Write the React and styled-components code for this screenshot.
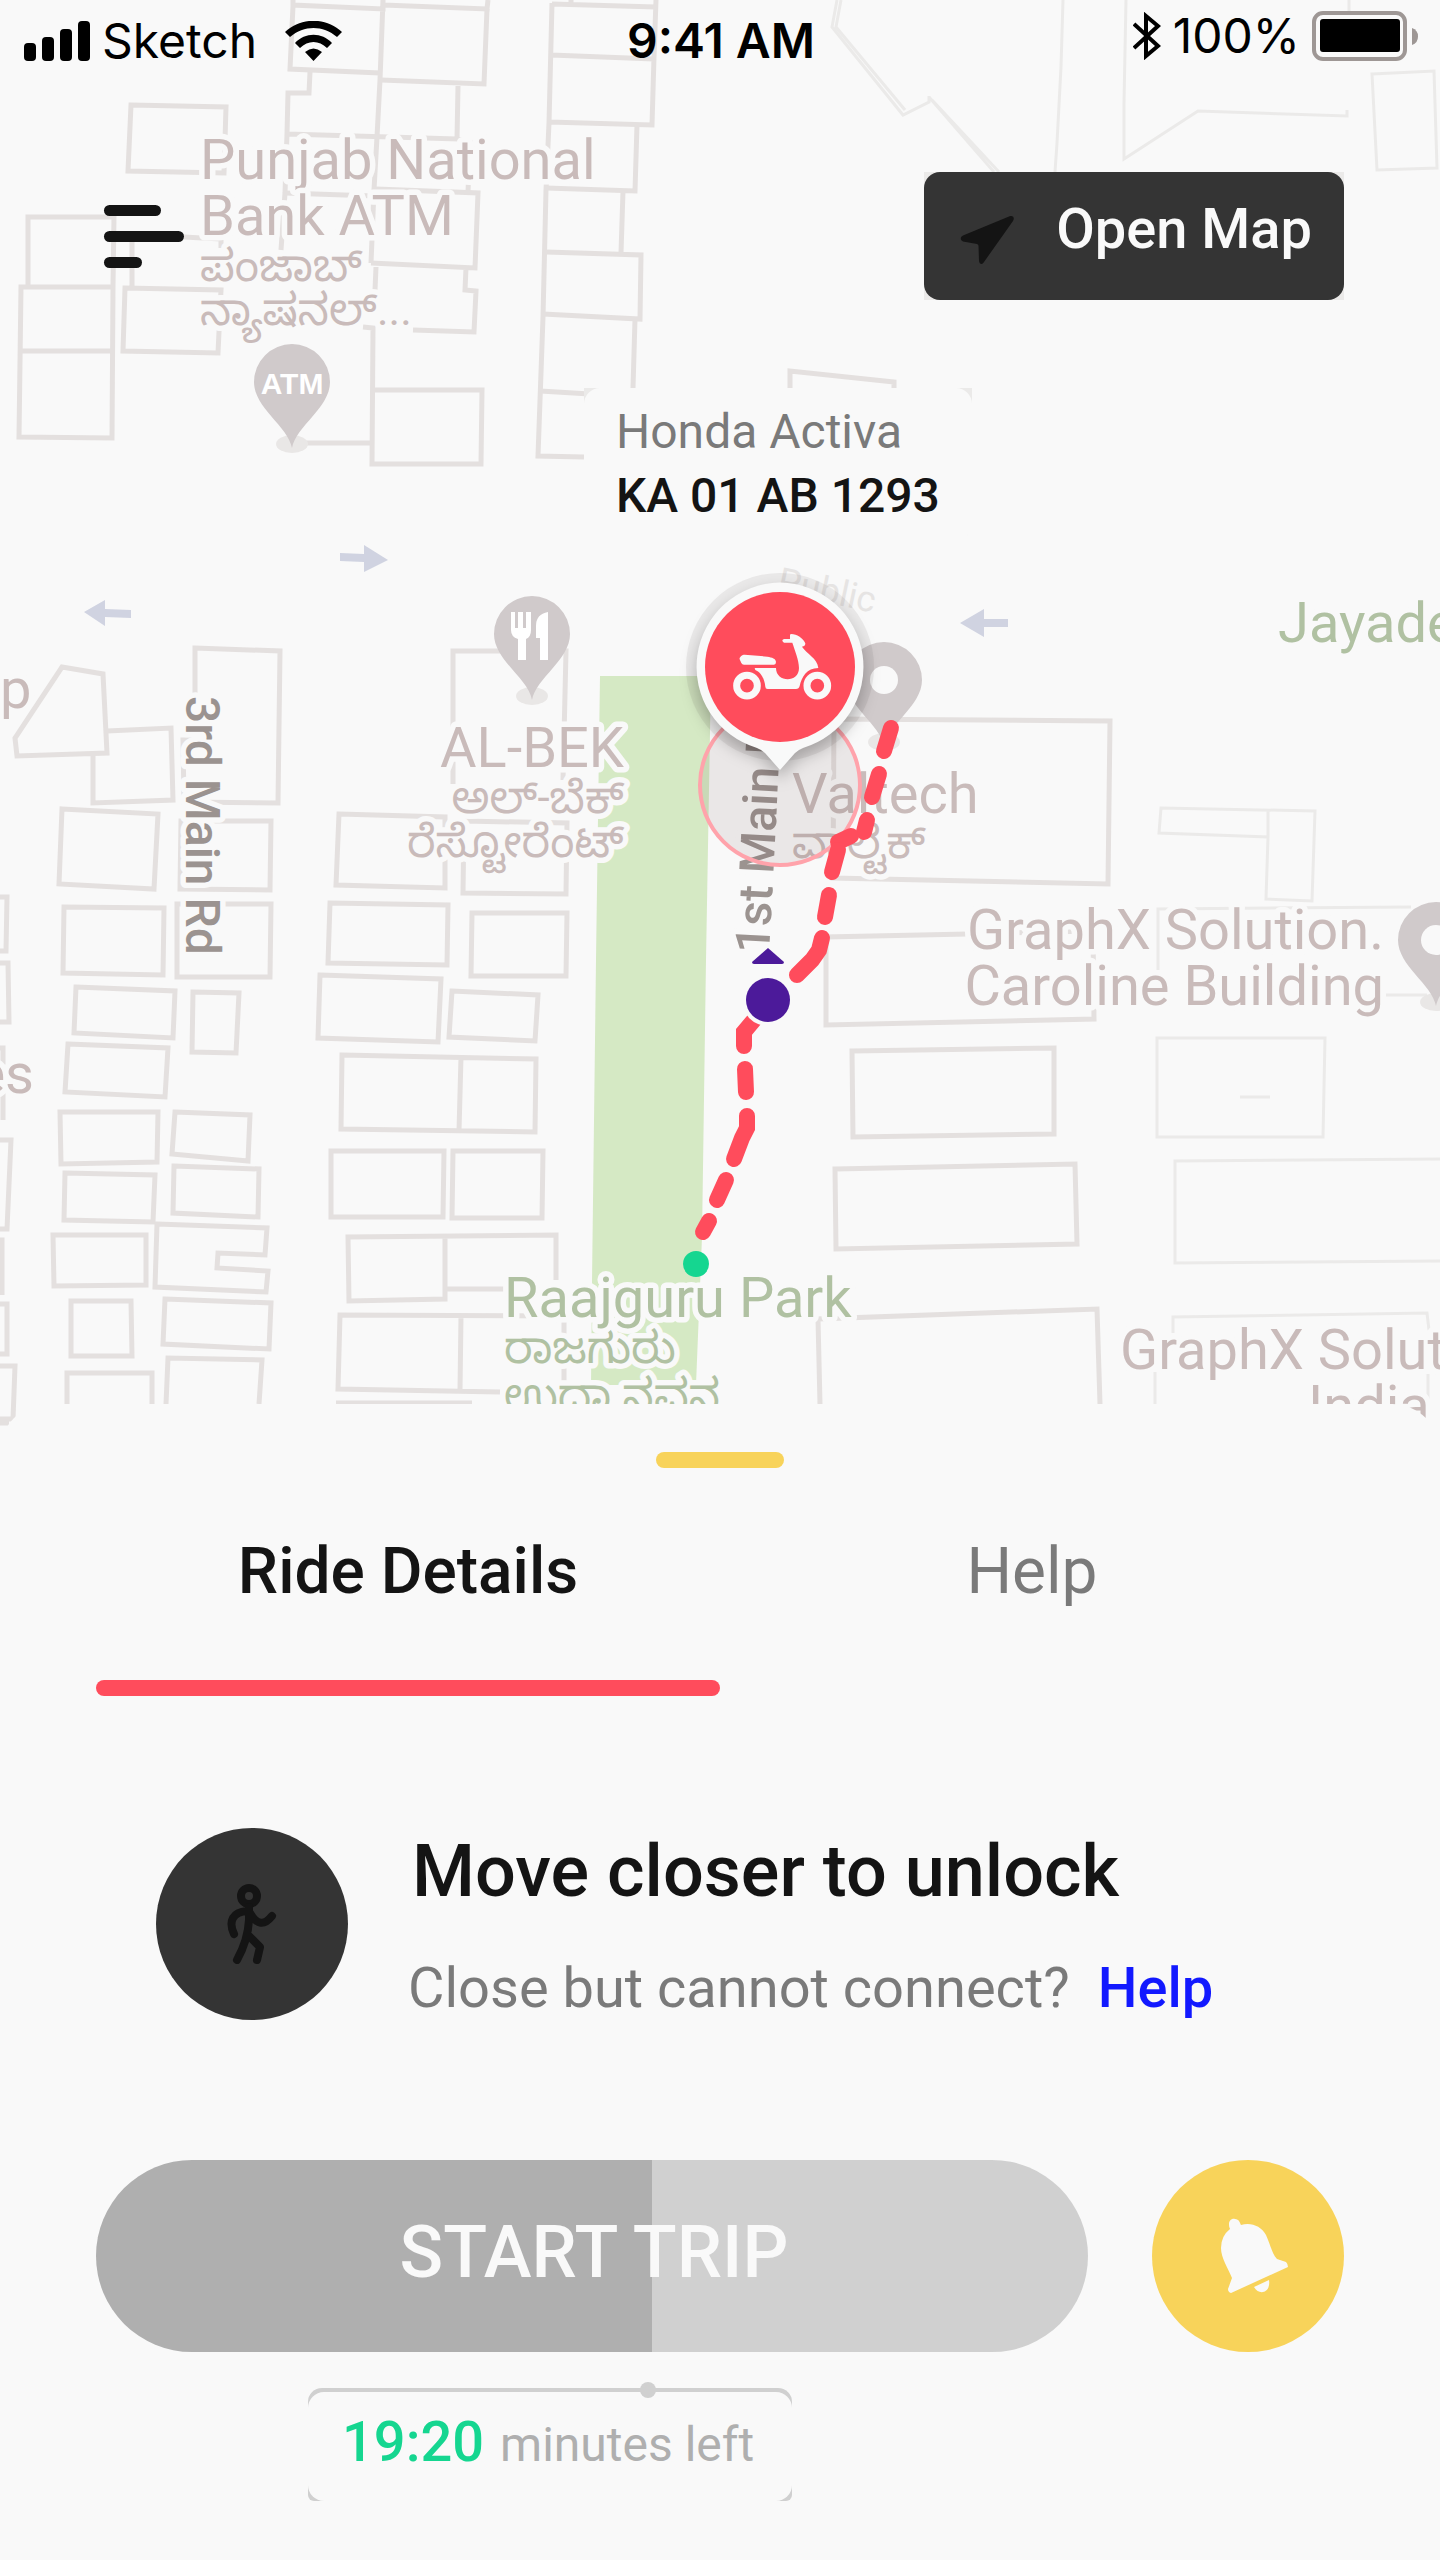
import React from 'react';
import styled, { createGlobalStyle } from 'styled-components';

const colors = {
  page: '#f9f9f9',
  ink: '#141414',
  dark: '#343434',
  muted: '#7a7a7a',
  red: '#ff4c5c',
  yellow: '#f8d35a',
  green: '#15d690',
  purple: '#4c1a9a',
  blue: '#1219ff',
  silver: '#d0d0d0',
  outline: '#e4e0df',
  faint: '#ebeae9',
  label: '#c9bbba',
  pin: '#d0cacb',
  park: '#b0c1a2',
};

const GlobalStyle = createGlobalStyle`
  * {
    box-sizing: border-box;
  }
  body {
    margin: 0;
    background: ${colors.page};
    color: ${colors.ink};
    font-family: Roboto, 'Noto Sans', sans-serif;
  }
  button {
    border: 0;
    padding: 0;
    background: none;
    color: inherit;
    font-family: inherit;
    cursor: pointer;
  }
`;

const Page = styled.main`
  width: 100%;
  overflow: hidden;
`;

const MapSection = styled.section`
  position: relative;
`;

const MapSvg = styled.svg`
  display: block;
  width: 100%;
`;

const MapText = styled.text`
  font-family: Roboto, 'Noto Sans Kannada', 'Noto Sans', sans-serif;
  font-size: ${(props) => props.$size || 56}px;
  font-weight: ${(props) => props.$weight || 400};
  fill: ${(props) => props.$color || colors.label};
  stroke: ${colors.page};
  stroke-width: 11px;
  stroke-linejoin: round;
  paint-order: stroke;
`;

const PinText = styled.text`
  font-family: 'Liberation Sans Narrow', 'Liberation Sans', sans-serif;
  font-size: 30px;
  font-weight: 700;
  fill: #ffffff;
`;

const Header = styled.header`
  position: absolute;
  top: 0;
  left: 0;
  right: 0;
`;

const StatusBar = styled.div`
  display: grid;
  grid-template-columns: 1fr auto 1fr;
  align-items: center;
  height: 82px;
  padding: 0 22px 0 24px;
  color: #000000;
  font: 400 48px/56px Inter, sans-serif;
`;

const StatusGroup = styled.div`
  display: flex;
  align-items: center;
  justify-content: ${(props) => (props.$end ? 'flex-end' : 'flex-start')};
  gap: 12px;
  padding-bottom: ${(props) => (props.$end ? 10 : 0)}px;

  svg {
    flex: none;
  }
`;

const Carrier = styled.span`
  margin-right: 16px;
`;

const Time = styled.time`
  font-weight: 600;
`;

const Toolbar = styled.nav`
  display: flex;
  align-items: center;
  justify-content: space-between;
  padding: 90px 96px 0 104px;
`;

const MenuButton = styled.button`
  display: flex;
  flex-direction: column;
  gap: 15px;
  width: 80px;
`;

const MenuLine = styled.span`
  width: ${(props) => props.$width}px;
  height: 11px;
  border-radius: 6px;
  background: ${colors.ink};
`;

const OpenMapFrame = styled.div`
  background: ${colors.faint};
`;

const OpenMapButton = styled.button`
  display: flex;
  align-items: center;
  gap: 40px;
  height: 128px;
  padding: 0 32px 0 36px;
  border-radius: 16px;
  background: ${colors.dark};
  color: ${colors.page};
  font-size: 56px;
  font-weight: 500;
  line-height: 64px;

  svg {
    margin-top: 8px;
  }

  span {
    padding-bottom: 14px;
  }
`;

const Callout = styled.div`
  position: absolute;
  top: 388px;
  left: 584px;
  background: linear-gradient(${colors.faint} 16px, ${colors.page} 16px);
`;

const CalloutBody = styled.div`
  display: flex;
  flex-direction: column;
  gap: 8px;
  padding: 16px 32px;
  border-radius: 16px;
  background: ${colors.page};
  font-size: 48px;
  line-height: 56px;
`;

const VehicleName = styled.span`
  color: ${colors.muted};
`;

const PlateNumber = styled.span`
  font-weight: 500;
`;

const Sheet = styled.section`
  position: relative;
  margin-top: -48px;
  padding: 48px 96px 60px;
  border-radius: 48px 48px 0 0;
  background: ${colors.page};
`;

const Handle = styled.div`
  width: 128px;
  height: 16px;
  margin: 0 auto;
  border-radius: 8px;
  background: ${colors.yellow};
`;

const Tabs = styled.div`
  display: grid;
  grid-template-columns: 1fr 1fr;
`;

const Tab = styled.button`
  padding-top: 66px;
  color: ${(props) => (props.$active ? colors.ink : colors.muted)};
  font-size: 64px;
  font-weight: ${(props) => (props.$active ? 500 : 400)};
  line-height: 76px;

  &::after {
    content: '';
    display: block;
    height: 16px;
    margin-top: 70px;
    border-radius: 8px;
    background: ${(props) => (props.$active ? colors.red : 'transparent')};
  }
`;

const Notice = styled.div`
  display: flex;
  gap: 60px;
  margin-top: 132px;
  padding-left: 60px;
`;

const NoticeIcon = styled.div`
  display: flex;
  flex: none;
  align-items: center;
  justify-content: center;
  width: 192px;
  height: 192px;
  border-radius: 50%;
  background: ${colors.dark};
`;

const NoticeBody = styled.div`
  display: flex;
  flex-direction: column;
  gap: 42px;
  padding-top: 2px;
`;

const NoticeTitle = styled.h1`
  margin: 0;
  padding-left: 4px;
  font-size: 72px;
  font-weight: 500;
  line-height: 84px;
`;

const NoticeText = styled.p`
  margin: 0;
  color: ${colors.muted};
  font-size: 56px;
  line-height: 64px;
`;

const HelpLink = styled.a`
  margin-left: 28px;
  color: ${colors.blue};
  font-weight: 500;
  text-decoration: none;
`;

const Actions = styled.div`
  display: flex;
  gap: 64px;
  margin-top: 140px;
`;

const StartButton = styled.button`
  flex: 1;
  height: 192px;
  padding: 0 0 8px 4px;
  border-radius: 96px;
  color: ${colors.page};
  font-size: 72px;
  font-weight: 500;
`;

const BellButton = styled.button`
  display: flex;
  flex: none;
  align-items: center;
  justify-content: center;
  width: 192px;
  height: 192px;
  padding-left: 14px;
  border-radius: 50%;
  background: ${colors.yellow};
`;

const Timer = styled.div`
  position: relative;
  width: fit-content;
  margin: 36px 0 0 212px;
  padding-top: 4px;
  border-radius: 14px 14px 6px 6px;
  background: ${colors.silver};
`;

const TimerDot = styled.span`
  position: absolute;
  top: -6px;
  left: 332px;
  width: 16px;
  height: 16px;
  border-radius: 50%;
  background: ${colors.silver};
`;

const TimerBody = styled.div`
  display: flex;
  align-items: baseline;
  gap: 16px;
  min-width: 484px;
  padding: 18px 36px 24px 34px;
  border-radius: 16px;
  background: ${colors.page};
  color: #afafaf;
  font-size: 48px;
  line-height: 64px;
`;

const TimeLeft = styled.strong`
  color: ${colors.green};
  font-size: 56px;
  font-weight: 500;
`;

// building outlines, as svg path data
const buildings = [
  'M293 0V5L383 9V0M383 5L487 9L488 0M293 6L290 69L380 73M383 0L380 80L377 137L374 190L371 263',
  'M487 9L484 84L381 80M310 72L309 93H288L287 134L285 193L281 250M287 134L457 139L458 86M457 139L470 142L468 192',
  'M376 189L478 193L475 268L371 263M285 193L374 196M376 267L375 290M466 268L465 290L476 291L474 332L413 330',
  'M363 327L373 328L372 464H481L482 390H373M292 443H372',
  'M131 105L226 107L224 173L128 171Z',
  'M28 286V217H114L113 286M21 287H113L112 438L19 437ZM21 351H113',
  'M132 242V286M184 237L221 239V248M125 288L221 290L218 353L123 351Z',
  'M571 0V3M552 3L549 123L546 190L543 317L538 456L584 457M552 4L656 7M656 0L654 57L652 125L549 122M551 55L654 59',
  'M637 125L635 191L546 188M623 191L621 253M546 252L641 255L640 319L543 314M635 319L633 388M540 391L590 394',
  'M790 388V371L894 382V388',
  'M62 667L103 674L107 753L17 756L15 738ZM107 731L171 728L173 800L93 803V753',
  'M195 648L280 651L278 803L184 802L183 740H195Z',
  'M62 809L158 814L154 889L59 884ZM181 821H271L270 890L180 889Z',
  'M64 907L164 908L163 975L63 973ZM177 904H271L270 977H177Z',
  'M453 784V651H566L563 780M339 814L445 817V888L336 885ZM464 821L567 823L566 894L463 893Z',
  'M330 903L448 905L447 965L328 963ZM472 913H567L566 976H471Z',
  'M76 987L175 991L173 1038L74 1033ZM193 992L239 993L236 1053L192 1052Z',
  'M68 1044L168 1048L165 1097L65 1092ZM60 1112H158L157 1162L61 1164Z',
  'M175 1112L250 1115L248 1161L172 1154ZM65 1173L155 1175L153 1222L64 1220Z',
  'M174 1166L259 1169L258 1217L173 1213ZM53 1235H146V1285L54 1286Z',
  'M157 1224L267 1228L265 1255L218 1253L217 1268L268 1271L266 1292L155 1287Z',
  'M71 1301H131L132 1356H71ZM165 1299L271 1303L269 1349L163 1344Z',
  'M67 1404V1373H152V1404M166 1404L168 1358L262 1360L259 1404',
  'M0 897H7L6 951H0M0 963H8L9 1022H0M0 1048H3V1120M0 1140H11L7 1229H0M0 1240H2V1295M0 1304H7V1354H0M0 1366H15L13 1419H0M0 1423H9',
  'M320 975L441 979L438 1042L318 1038ZM452 991L538 995L535 1041L449 1037Z',
  'M342 1055L536 1059L535 1132L341 1129ZM461 1057L459 1131',
  'M331 1151H444L443 1217H331ZM453 1151H543L542 1218H452Z',
  'M556 1280V1235L348 1237L349 1301L445 1299V1237M445 1289H510',
  'M564 1390V1316L340 1315L338 1389L500 1392M461 1316L460 1390M336 1403H472',
  'M834 719L1110 721L1108 884L833 878Z',
  'M968 934L826 937V1025L1094 1019L1093 931Z',
  'M852 1051L1054 1048V1134L853 1137ZM835 1169L1075 1164L1077 1244L836 1249Z',
  'M820 1404L818 1319L1097 1309L1100 1404',
];

const faintBuildings = [
  'M837 0L832 27L903 115L929 102V96M841 0L836 27L905 110M929 97L994 172M932 100L999 172',
  'M1063 0L1061 67L1057 143L1055 172M1126 0L1124 103V159L1198 111L1347 116V110M1349 0V12',
  'M1372 74L1434 71L1437 168L1377 170Z',
  'M1161 808L1315 811L1312 901L1266 899L1268 837L1159 833ZM1268 811V837',
  'M1411 907L1158 909V970M1386 995H1427',
  'M1157 1038H1325L1323 1137H1157ZM1240 1097H1270',
  'M1440 1159L1175 1161V1263L1440 1261M1173 1333V1317L1427 1313L1429 1330M1155 1372V1404M1428 1374V1404',
];

const route = [
  'M891 728L884 751',
  'M879 774L872 797',
  'M867 820L864 832',
  'M851 836L838 842',
  'M838 850L832 872',
  'M829 895L825 917',
  'M822 938L819 950L812 960L797 975',
  'M754 1020L744 1032V1046',
  'M745 1069L746 1092',
  'M747 1116V1128L742 1138L734 1159',
  'M726 1180L717 1200',
  'M709 1221L703 1232',
];

const PlacePin = ({ x, y, children }) => (
  <g transform={`translate(${x} ${y})`}>
    <ellipse cx="0" cy="62" rx="16" ry="9" fill="#e9e7e6" />
    <path
      d="M0 -38A38 38 0 0 1 38 0C38 26 4 44 0 66C-4 44 -38 26 -38 0A38 38 0 0 1 0 -38Z"
      fill={colors.pin}
    />
    {children}
  </g>
);

const Scooter = () => (
  <g transform="translate(640 540) scale(0.3333)" fill={colors.page}>
    <circle cx="321" cy="437" r="31" fill="none" stroke={colors.page} strokeWidth="21" />
    <circle cx="532" cy="437" r="31" fill="none" stroke={colors.page} strokeWidth="21" />
    <path d="M314 344C306 344 297 352 299 358L304 369Q306 374 312 374H402Q408 374 408 366C408 356 396 352 382 350Z" />
    <path d="M344 384H408C408 428 477 430 477 384C477 360 464 330 457 308H432Q422 301 432 297H450V284Q452 281 460 283C478 286 490 298 496 310Q496 320 486 320C500 342 532 354 535 384C500 384 486 410 479 438Q477 447 468 447H383Q376 447 376 440C374 416 362 396 346 390Z" />
  </g>
);

const RideMap = () => (
  <MapSvg viewBox="0 0 1440 1452" role="img" aria-label="Route to your scooter">
    <path d="M600 676H711L706 960L702 1237L696 1385H591L592 1282L596 960Z" fill="#d5e9c4" />
    <g fill="none" stroke={colors.faint} strokeWidth="3">
      {faintBuildings.map((d) => <path key={d} d={d} />)}
    </g>
    <g fill="none" stroke={colors.outline} strokeWidth="5">
      {buildings.map((d) => <path key={d} d={d} />)}
    </g>

    <g fill="#d0d3e1">
      <path d="M340 553L364 554V545L388 560L364 572V562L340 561Z" />
      <path d="M84 612L105 600V609L131 610V618L105 617V626Z" />
      <path d="M960 623L984 609V619H1008V627H984V637Z" />
    </g>

    <MapText x="200" y="179">Punjab National</MapText>
    <MapText x="200" y="235">Bank ATM</MapText>
    <MapText x="200" y="281" $size={44}>ಪಂಜಾಬ್</MapText>
    <MapText x="200" y="325" $size={44}>ನ್ಯಾಷನಲ್...</MapText>
    <MapText x="624" y="767" textAnchor="end">AL-BEK</MapText>
    <MapText x="624" y="813" textAnchor="end" $size={44}>ಅಲ್-ಬೆಕ್</MapText>
    <MapText x="624" y="857" textAnchor="end" $size={44}>ರೆಸ್ಟೋರೆಂಟ್</MapText>
    <MapText x="0" y="708">p</MapText>
    <MapText x="34" y="1093" textAnchor="end">es</MapText>
    <MapText x="792" y="858" $size={44}>ವಾಲ್ಟೆಕ್</MapText>
    <MapText x="792" y="813">Valtech</MapText>
    <MapText x="1278" y="642" $color={colors.park}>Jayadeva</MapText>
    <MapText x="1384" y="949" textAnchor="end">GraphX Solution.</MapText>
    <MapText x="1384" y="1005" textAnchor="end">Caroline Building</MapText>
    <MapText x="1120" y="1369">GraphX Solutions</MapText>
    <MapText x="1308" y="1425">India</MapText>
    <MapText x="504" y="1363" $size={44} $color={colors.park}>ರಾಜಗುರು</MapText>
    <MapText x="504" y="1410" $size={44} $color={colors.park}>ಉದ್ಯಾನವನ</MapText>
    <MapText x="504" y="1317" $color={colors.park}>Raajguru Park</MapText>
    <MapText transform="translate(186 696) rotate(90)" $size={48} $weight={500} $color="#9b9390">
      3rd Main Rd
    </MapText>
    <MapText transform="translate(769 954) rotate(-87)" $size={48} $weight={500} $color="#9b9390">
      1st Main Rd
    </MapText>
    <MapText transform="translate(776 592) rotate(12)" $size={36} $color="#e6e4e3">Public</MapText>

    <PlacePin x={292} y={382}>
      <PinText x="0" y="12" textAnchor="middle">ATM</PinText>
    </PlacePin>
    <PlacePin x={532} y={634}>
      <path
        d="M-21 -22H-17V-6H-14V-22H-9V-6H-6V-22H-1V-4Q-1 3 -6 5V26H-14V5Q-21 3 -21 -4ZM16 -22V26H8V4H4V-8Q4 -20 16 -22Z"
        fill="#ffffff"
      />
    </PlacePin>
    <PlacePin x={884} y={680}>
      <circle r="14" fill={colors.page} />
    </PlacePin>
    <PlacePin x={1436} y={940}>
      <circle r="15" fill={colors.page} />
    </PlacePin>

    <circle cx="780" cy="785" r="80" fill="rgba(90, 50, 50, 0.09)" stroke="#ffa3ab" strokeWidth="4" />
    <g fill="none" stroke={colors.red} strokeWidth="16" strokeLinecap="round">
      {route.map((d) => <path key={d} d={d} />)}
    </g>
    <circle cx="768" cy="1000" r="26" fill={colors.page} />
    <circle cx="768" cy="1000" r="22" fill={colors.purple} />
    <path d="M768 948L784 962Q784 964 782 964H754Q752 964 752 962Z" fill={colors.purple} />
    <circle cx="696" cy="1264" r="13" fill={colors.green} />

    <circle cx="780" cy="667" r="94" fill="rgba(60, 50, 50, 0.08)" />
    <path
      d="M780 582.5A84.5 84.5 0 0 1 803 748Q798 750 795 753L780 770L765 753Q762 750 757 748A84.5 84.5 0 0 1 780 582.5Z"
      fill={colors.page}
      style={{ filter: 'drop-shadow(0 8px 8px rgba(0, 0, 0, 0.25))' }}
    />
    <circle cx="780" cy="667" r="75" fill={colors.red} />
    <Scooter />
  </MapSvg>
);

const SignalIcon = () => (
  <svg width="66" height="40" viewBox="0 0 66 40">
    <rect x="0" y="22" width="12" height="18" rx="4" />
    <rect x="18" y="16" width="12" height="24" rx="4" />
    <rect x="36" y="8" width="12" height="32" rx="4" />
    <rect x="54" y="0" width="12" height="40" rx="4" />
  </svg>
);

const WifiIcon = () => (
  <svg width="57" height="40" viewBox="0 0 57 40">
    <path d="M0 11C16 -4 41 -4 57 11L52 16C38 4 19 4 5 16ZM10 22C20 11 37 11 47 22L42 27C34 19 23 19 15 27ZM20 31Q28.5 24 37 31L28.5 40Z" />
  </svg>
);

const BluetoothIcon = () => (
  <svg width="28" height="48" viewBox="0 0 28 48" fill="none" stroke="#000000" strokeWidth="4">
    <path d="M1 12L25 34L13 44V4L25 14L1 36" />
  </svg>
);

const BatteryIcon = () => (
  <svg width="106" height="50" viewBox="0 0 106 50">
    <rect x="2" y="2" width="91" height="46" rx="9" fill="none" stroke="#9e9795" strokeWidth="4" />
    <rect x="8" y="8" width="80" height="33" rx="3" />
    <path d="M100 17Q106 19 106 25.500Q106 32 100 34Z" fill="#9e9795" />
  </svg>
);

const NavigateIcon = () => (
  <svg width="56" height="48" viewBox="0 0 56 48" fill={colors.ink}>
    <path d="M49 0.500L3 19.500C0 21 0 24 3 25.500L17 28Q18.500 28.500 18.500 30L19 45C19.500 48.500 22.500 49 24 46L53 5C55 1.500 53 -1 49 0.500Z" />
  </svg>
);

const WalkIcon = () => (
  <svg
    width="50"
    height="80"
    viewBox="0 0 50 80"
    fill="none"
    stroke={colors.ink}
    strokeWidth="8"
    strokeLinecap="round"
    strokeLinejoin="round"
  >
    <circle cx="22" cy="12" r="8" />
    <path d="M22 23V36Q21 56 10 76M21 51L33 63L30 76M20 27C6 28 1 37 7 50M23 29C30 41 37 42 45 32" />
  </svg>
);

const BellIcon = () => (
  <svg width="68" height="76" viewBox="0 0 68 76" fill={colors.page}>
    <path d="M9 11C6 4 10 0 14 1C18 1 19 5 20 7C30 4 40 8 45 17C50 28 51 36 56 41L65 44Q67 46 67 49L10 75Q7 74 7 71L11 60C7 50 0 40 0 30Q0 18 9 11Z" />
    <path d="M33 69L48 62C50 75 38 78 33 69Z" />
  </svg>
);

const tripProgress = 56;

const App = () => (
  <Page>
    <GlobalStyle />
    <MapSection>
      <RideMap />
      <Header>
        <StatusBar>
          <StatusGroup>
            <SignalIcon />
            <Carrier>Sketch</Carrier>
            <WifiIcon />
          </StatusGroup>
          <Time>9:41 AM</Time>
          <StatusGroup $end>
            <BluetoothIcon />
            <span>100%</span>
            <BatteryIcon />
          </StatusGroup>
        </StatusBar>
        <Toolbar>
          <MenuButton type="button" aria-label="Menu">
            <MenuLine $width={57} />
            <MenuLine $width={80} />
            <MenuLine $width={38} />
          </MenuButton>
          <OpenMapFrame>
            <OpenMapButton type="button">
              <NavigateIcon />
              <span>Open Map</span>
            </OpenMapButton>
          </OpenMapFrame>
        </Toolbar>
      </Header>
      <Callout>
        <CalloutBody>
          <VehicleName>Honda Activa</VehicleName>
          <PlateNumber>KA 01 AB 1293</PlateNumber>
        </CalloutBody>
      </Callout>
    </MapSection>
    <Sheet>
      <Handle />
      <Tabs role="tablist">
        <Tab type="button" role="tab" aria-selected="true" $active>Ride Details</Tab>
        <Tab type="button" role="tab" aria-selected="false">Help</Tab>
      </Tabs>
      <Notice>
        <NoticeIcon>
          <WalkIcon />
        </NoticeIcon>
        <NoticeBody>
          <NoticeTitle>Move closer to unlock</NoticeTitle>
          <NoticeText>
            Close but cannot connect?
            <HelpLink href="#help">Help</HelpLink>
          </NoticeText>
        </NoticeBody>
      </Notice>
      <Actions>
        <StartButton
          type="button"
          style={{ background: `linear-gradient(90deg, #afafaf ${tripProgress}%, ${colors.silver} ${tripProgress}%)` }}
        >
          START TRIP
        </StartButton>
        <BellButton type="button" aria-label="Ring the scooter">
          <BellIcon />
        </BellButton>
      </Actions>
      <Timer>
        <TimerDot />
        <TimerBody>
          <TimeLeft>19:20</TimeLeft>
          <span>minutes left</span>
        </TimerBody>
      </Timer>
    </Sheet>
  </Page>
);

export default App;
